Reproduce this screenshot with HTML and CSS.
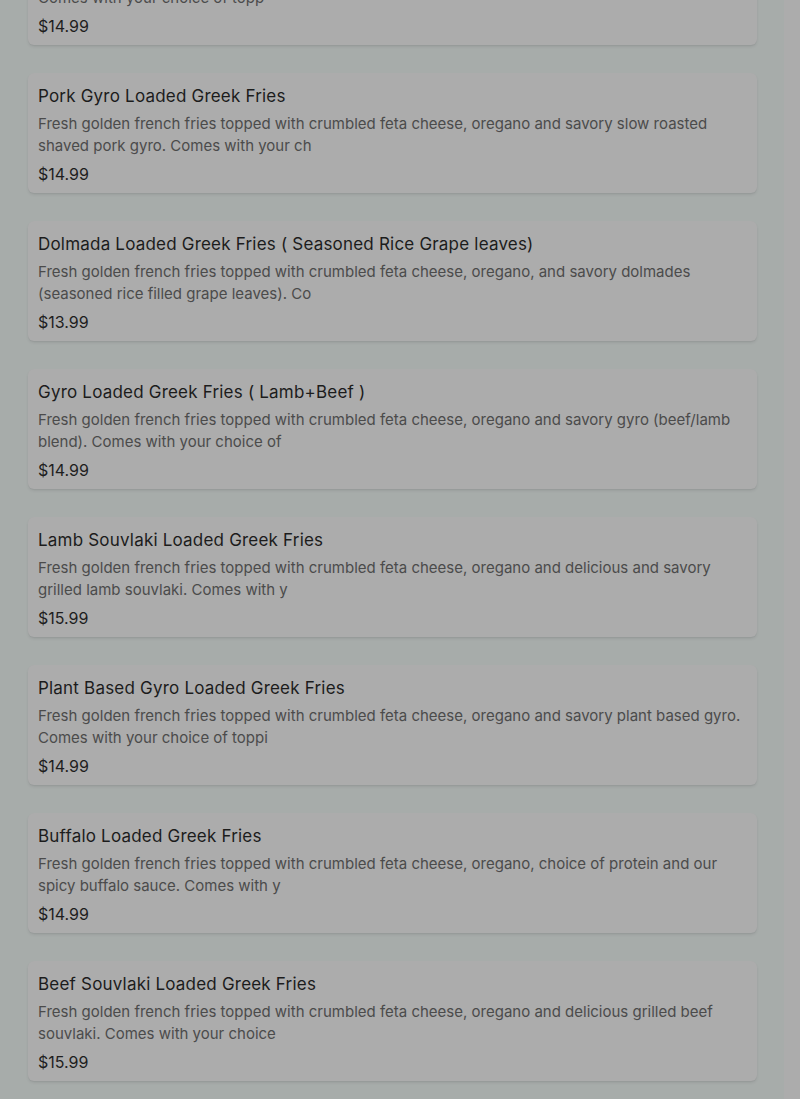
FILE: index.html
```html
<!DOCTYPE html>
<html lang="en">
<head>
<meta charset="utf-8">
<title>Loaded Greek Fries</title>
<link rel="stylesheet" href="styles.css">
</head>
<body>
<div class="page">
  <main class="main">
    <div class="list">
      <article class="card">
        <h3 class="title">Chicken Souvlaki Loaded Greek Fries</h3>
        <p class="desc">Fresh golden french fries topped with crumbled feta cheese, oregano and savory chicken souvlaki. Comes with your choice of topp</p>
        <div class="price">$14.99</div>
      </article>
      <article class="card">
        <h3 class="title">Pork Gyro Loaded Greek Fries</h3>
        <p class="desc">Fresh golden french fries topped with crumbled feta cheese, oregano and savory slow roasted shaved pork gyro. Comes with your ch</p>
        <div class="price">$14.99</div>
      </article>
      <article class="card">
        <h3 class="title">Dolmada Loaded Greek Fries ( Seasoned Rice Grape leaves)</h3>
        <p class="desc">Fresh golden french fries topped with crumbled feta cheese, oregano, and savory dolmades (seasoned rice filled grape leaves). Co</p>
        <div class="price">$13.99</div>
      </article>
      <article class="card">
        <h3 class="title">Gyro Loaded Greek Fries ( Lamb+Beef )</h3>
        <p class="desc">Fresh golden french fries topped with crumbled feta cheese, oregano and savory gyro (beef/lamb blend). Comes with your choice of</p>
        <div class="price">$14.99</div>
      </article>
      <article class="card">
        <h3 class="title">Lamb Souvlaki Loaded Greek Fries</h3>
        <p class="desc">Fresh golden french fries topped with crumbled feta cheese, oregano and delicious and savory grilled lamb souvlaki. Comes with y</p>
        <div class="price">$15.99</div>
      </article>
      <article class="card">
        <h3 class="title">Plant Based Gyro Loaded Greek Fries</h3>
        <p class="desc">Fresh golden french fries topped with crumbled feta cheese, oregano and savory plant based gyro. Comes with your choice of toppi</p>
        <div class="price">$14.99</div>
      </article>
      <article class="card">
        <h3 class="title">Buffalo Loaded Greek Fries</h3>
        <p class="desc">Fresh golden french fries topped with crumbled feta cheese, oregano, choice of protein and our spicy buffalo sauce. Comes with y</p>
        <div class="price">$14.99</div>
      </article>
      <article class="card">
        <h3 class="title">Beef Souvlaki Loaded Greek Fries</h3>
        <p class="desc">Fresh golden french fries topped with crumbled feta cheese, oregano and delicious grilled beef souvlaki. Comes with your choice</p>
        <div class="price">$15.99</div>
      </article>
    </div>
  </main>
  <div class="track"></div>
</div>
</body>
</html>
```

FILE: styles.css
```css
* { box-sizing: border-box; }
html, body {
  margin: 0;
  padding: 0;
  height: 100%;
  overflow: hidden;
}
body {
  font-family: Inter, "Noto Sans", sans-serif;
  background: #a7acaa;
}
.page {
  display: flex;
  height: 1099px;
  overflow: hidden;
}
.main {
  flex: 1;
  padding: 0 27px 0 28px;
  overflow: hidden;
}
.track {
  width: 16px;
  background: #acacac;
}
.list {
  display: flex;
  flex-direction: column;
  gap: 28px;
  margin-top: -75px;
}
.card {
  background: #acacac;
  border-radius: 6px;
  padding: 11px 10px 7px;
  box-shadow: 0 2px 3px rgba(0, 0, 0, 0.07), 0 1px 1px rgba(0, 0, 0, 0.04);
}
.title {
  margin: 0;
  font-size: 17px;
  line-height: 24px;
  font-weight: 440;
  letter-spacing: 0.2px;
  color: #1c1c1c;
}
.desc {
  margin: 5px 0 0;
  font-size: 15px;
  line-height: 22px;
  font-weight: 400;
  color: #4b4b4b;
}
.price {
  margin-top: 5px;
  font-size: 16px;
  line-height: 24px;
  font-weight: 400;
  color: #1e1e1e;
}
```
